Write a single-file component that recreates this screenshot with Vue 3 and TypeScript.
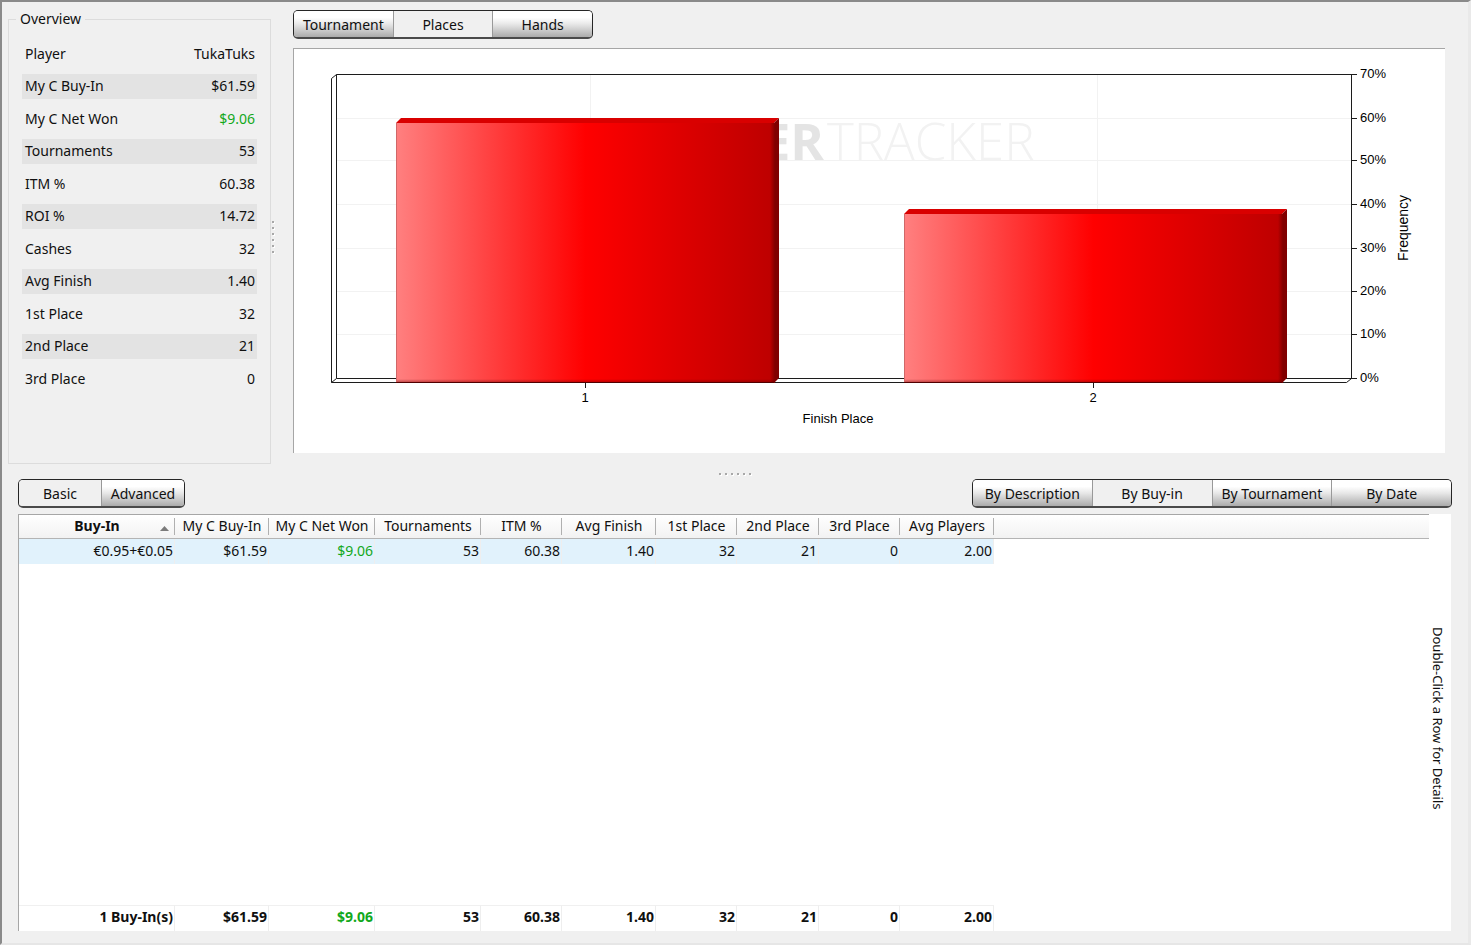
<script setup lang="ts">
import { ref } from 'vue'

interface Stat {
  label: string
  value: string
  positive?: boolean
}

interface Column {
  label: string
  width: number
  value: string
  total: string
  positive?: boolean
}

const stats: Stat[] = [
  { label: 'Player', value: 'TukaTuks' },
  { label: 'My C Buy-In', value: '$61.59' },
  { label: 'My C Net Won', value: '$9.06', positive: true },
  { label: 'Tournaments', value: '53' },
  { label: 'ITM %', value: '60.38' },
  { label: 'ROI %', value: '14.72' },
  { label: 'Cashes', value: '32' },
  { label: 'Avg Finish', value: '1.40' },
  { label: '1st Place', value: '32' },
  { label: '2nd Place', value: '21' },
  { label: '3rd Place', value: '0' },
]

const columns: Column[] = [
  { label: 'Buy-In', width: 156, value: '€0.95+€0.05', total: '1 Buy-In(s)' },
  { label: 'My C Buy-In', width: 94, value: '$61.59', total: '$61.59' },
  { label: 'My C Net Won', width: 106, value: '$9.06', total: '$9.06', positive: true },
  { label: 'Tournaments', width: 106, value: '53', total: '53' },
  { label: 'ITM %', width: 81, value: '60.38', total: '60.38' },
  { label: 'Avg Finish', width: 94, value: '1.40', total: '1.40' },
  { label: '1st Place', width: 81, value: '32', total: '32' },
  { label: '2nd Place', width: 82, value: '21', total: '21' },
  { label: '3rd Place', width: 81, value: '0', total: '0' },
  { label: 'Avg Players', width: 94, value: '2.00', total: '2.00' },
]

const chartTabs = ['Tournament', 'Places', 'Hands']
const modeTabs = ['Basic', 'Advanced']
const groupTabs = ['By Description', 'By Buy-in', 'By Tournament', 'By Date']

const chartTab = ref('Places')
const modeTab = ref('Basic')
const groupTab = ref('By Buy-in')

const ticks = [
  { label: '70%', y: 25 },
  { label: '60%', y: 69 },
  { label: '50%', y: 111 },
  { label: '40%', y: 155 },
  { label: '30%', y: 199 },
  { label: '20%', y: 242 },
  { label: '10%', y: 285 },
  { label: '0%', y: 329 },
]

const bars = [
  { label: '1', x: 102, top: 74, tick: 291 },
  { label: '2', x: 610, top: 165, tick: 799 },
]
</script>

<template>
  <main class="page">
    <section class="upper">
      <fieldset class="overview">
        <legend>Overview</legend>
        <dl>
          <div v-for="s in stats" :key="s.label" class="stat">
            <dt>{{ s.label }}</dt>
            <dd :class="{ positive: s.positive }">{{ s.value }}</dd>
          </div>
        </dl>
      </fieldset>
      <div class="grip vertical"><i v-for="n in 6" :key="n"></i></div>
      <div class="report">
        <div class="tabs wide">
          <button
            v-for="t in chartTabs"
            :key="t"
            type="button"
            :class="{ active: t === chartTab }"
            @click="chartTab = t"
          >{{ t }}</button>
        </div>
        <div class="chart">
          <svg viewBox="0 0 1151 404" role="img" aria-label="Frequency by finish place">
            <defs>
              <linearGradient id="face" x1="0" x2="1" y1="0" y2="0">
                <stop offset="0" stop-color="#ff8080" />
                <stop offset="0.5" stop-color="#ff0000" />
                <stop offset="1" stop-color="#bc0000" />
              </linearGradient>
              <linearGradient id="edge" x1="0" x2="1" y1="0" y2="0">
                <stop offset="0" stop-color="#800000" stop-opacity="0" />
                <stop offset="1" stop-color="#800000" />
              </linearGradient>
              <linearGradient id="base" x1="0" x2="0" y1="0" y2="1">
                <stop offset="0" stop-color="#600000" stop-opacity="0" />
                <stop offset="1" stop-color="#600000" stop-opacity="0.5" />
              </linearGradient>
            </defs>

            <g class="gridlines">
              <path v-for="t in ticks.slice(1, 7)" :key="t.label" :d="`M42 ${t.y + 0.5}H1057`" />
              <path d="M296.5 25V329M803.5 25V329" />
            </g>
            <text class="mark strong" x="530" y="111" text-anchor="end">ER</text>
            <text class="mark" x="533" y="111">TRACKER</text>

            <g class="frame">
              <path d="M37.5 333.5V29.5L42.5 25.5H1063M42.5 25.5V329.5H1063M1057.5 25.5V329.5L1052.5 333.5H37.5L42.5 329.5" />
              <path v-for="t in ticks.slice(1, 7)" :key="t.label" :d="`M1057 ${t.y + 0.5}H1063`" />
              <path v-for="b in bars" :key="b.label" :d="`M${b.tick + 0.5} 333V339`" />
            </g>

            <g v-for="b in bars" :key="b.label" :transform="`translate(${b.x} 0)`">
              <path :d="`M0 ${b.top}L5 ${b.top - 5}H383L378 ${b.top}Z`" fill="#d90000" />
              <path :d="`M378 ${b.top}L383 ${b.top - 5}V329L378 334Z`" fill="#800000" />
              <rect :y="b.top" width="379" :height="334 - b.top" fill="url(#face)" />
              <rect x="374" :y="b.top" width="5" :height="334 - b.top" fill="url(#edge)" />
              <rect y="330" width="379" height="4" fill="url(#base)" />
              <path :d="`M0.5 ${b.top}V334`" stroke="#d06868" />
              <path d="M0 333.5H378" stroke="#500000" />
            </g>

            <g class="labels">
              <text v-for="t in ticks" :key="t.label" x="1066" :y="t.y + 4">{{ t.label }}</text>
              <text v-for="b in bars" :key="b.label" :x="b.tick" y="353" text-anchor="middle">{{ b.label }}</text>
              <text x="544" y="374" text-anchor="middle">Finish Place</text>
              <text class="axis" transform="translate(1114 179) rotate(-90)" text-anchor="middle">Frequency</text>
            </g>
          </svg>
        </div>
      </div>
    </section>

    <div class="grip horizontal"><i v-for="n in 6" :key="n"></i></div>

    <section class="lower">
      <div class="toolbar">
        <div class="tabs narrow">
          <button
            v-for="t in modeTabs"
            :key="t"
            type="button"
            :class="{ active: t === modeTab }"
            @click="modeTab = t"
          >{{ t }}</button>
        </div>
        <div class="tabs broad">
          <button
            v-for="t in groupTabs"
            :key="t"
            type="button"
            :class="{ active: t === groupTab }"
            @click="groupTab = t"
          >{{ t }}</button>
        </div>
      </div>

      <div class="results">
        <table>
          <colgroup>
            <col v-for="c in columns" :key="c.label" :style="{ width: c.width + 'px' }" />
            <col />
          </colgroup>
          <thead>
            <tr>
              <th v-for="(c, i) in columns" :key="c.label" scope="col" :class="{ sorted: i === 0 }">
                {{ c.label }}
                <svg v-if="i === 0" class="arrow" viewBox="0 0 9 5" aria-hidden="true">
                  <path d="M0 5L4.5 0L9 5Z" fill="#7b7b7b" />
                </svg>
              </th>
              <td class="rest"></td>
            </tr>
          </thead>
          <tbody>
            <tr class="selected">
              <td v-for="c in columns" :key="c.label" :class="{ positive: c.positive }">{{ c.value }}</td>
              <td class="rest"></td>
            </tr>
            <tr class="space">
              <td :colspan="columns.length + 1"></td>
            </tr>
          </tbody>
          <tfoot>
            <tr>
              <td v-for="c in columns" :key="c.label" :class="{ positive: c.positive }">{{ c.total }}</td>
              <td class="rest"></td>
            </tr>
          </tfoot>
        </table>
        <aside class="hint"><span>Double-Click a Row for Details</span></aside>
      </div>
    </section>
  </main>
</template>

<style>
body {
  margin: 0;
  background: #f0f0f0;
}
</style>

<style scoped>
.page {
  box-sizing: border-box;
  min-height: 100vh;
  display: flex;
  flex-direction: column;
  padding: 8px 0 12px;
  border: solid;
  border-width: 2px 3px 2px 2px;
  border-color: #8a8a8a #e9e9e9 #e6e6e6 #8a8a8a;
  background: #f0f0f0;
  color: #101010;
  font: 14px/18px "Noto Sans", "Open Sans", sans-serif;
}

.positive {
  color: #12a81c;
}

.upper {
  display: flex;
  padding: 0 23px 0 6px;
}

.overview {
  box-sizing: border-box;
  flex: none;
  width: 263px;
  margin: 0;
  padding: 6px 13px 0;
  border: 1px solid #dcdcdc;
}

.overview legend {
  margin-left: -6px;
  padding: 0 4px;
}

dl {
  margin: 0;
}

.stat {
  box-sizing: border-box;
  display: flex;
  justify-content: space-between;
  align-items: center;
  height: 40px;
  padding: 0 2px 1px 3px;
}

.stat:nth-child(even) {
  height: 25px;
  background: #e3e3e3;
}

dd {
  margin: 0;
}

.grip {
  display: flex;
  gap: 4px;
}

.grip i {
  width: 2px;
  height: 2px;
  background: #a8a8a8;
  box-shadow: 1px 1px 0 #ffffff;
}

.grip.vertical {
  box-sizing: border-box;
  flex: none;
  width: 22px;
  padding-left: 1px;
  flex-direction: column;
  justify-content: center;
}

.grip.horizontal {
  height: 11px;
  padding-bottom: 4px;
  justify-content: center;
  align-items: flex-end;
}

.report {
  flex: 1;
  min-width: 0;
  padding-bottom: 11px;
}

.tabs {
  box-sizing: border-box;
  display: flex;
  height: 29px;
  border: 1px solid #262626;
  border-bottom: 2px solid #4a4a4a;
  border-radius: 5px;
  overflow: hidden;
}

.tabs.wide {
  width: 300px;
}

.tabs.narrow {
  width: 167px;
}

.tabs.broad {
  width: 480px;
}

.tabs button {
  flex: 1 1 0;
  min-width: 0;
  margin: 0;
  padding: 2px 0 0;
  border: 0;
  background: linear-gradient(#ffffff 25%, #e8e8e8 50%, #ababab);
  color: inherit;
  font: inherit;
  white-space: nowrap;
}

.tabs button + button {
  border-left: 1px solid #999999;
}

.tabs button.active {
  background: #f0f0f0;
}

.chart {
  margin-top: 9px;
  border: solid #a6a6a6;
  border-width: 1px 0 0 1px;
  background: #ffffff;
}

.chart svg {
  display: block;
  width: 100%;
  height: auto;
}

.gridlines {
  fill: none;
  stroke: #f2f2f2;
}

.frame {
  fill: none;
  stroke: #1c1c1c;
}

.labels {
  fill: #000000;
  font: 13px "Liberation Sans", Arial, sans-serif;
}

.labels .axis {
  font-size: 14px;
}

.mark {
  fill: #f2f2f2;
  font: 300 51px "Open Sans", "Noto Sans", sans-serif;
}

.mark.strong {
  fill: #e4e4e4;
  font-weight: 700;
}

.lower {
  flex: 1;
  display: flex;
  flex-direction: column;
  padding: 0 17px 0 16px;
}

.toolbar {
  display: flex;
  justify-content: space-between;
  margin-right: -1px;
}

.results {
  flex: 1;
  display: flex;
  margin-top: 6px;
  background: #ffffff;
}

table {
  flex: 1;
  min-width: 0;
  table-layout: fixed;
  border-collapse: separate;
  border-spacing: 0;
  border: solid #a6a6a6;
  border-width: 1px 0 0 1px;
}

th,
td {
  box-sizing: border-box;
  height: 25px;
  padding: 0 1px 2px 0;
  border-right: 1px solid #eeeeee;
  text-align: right;
  white-space: nowrap;
}

thead th,
thead td {
  height: 24px;
  padding: 0 0 2px;
  border-bottom: 1px solid #b4b4b4;
  border-right: 0;
  background:
    linear-gradient(#b0b0b0, #b0b0b0) right 3px / 1px 17px no-repeat,
    linear-gradient(#ffffff, #f2f2f2);
  font-weight: 400;
  text-align: center;
}

th.sorted {
  position: relative;
  font-weight: 700;
}

.arrow {
  position: absolute;
  right: 6px;
  bottom: 7px;
  width: 9px;
  height: 5px;
}

.selected td {
  background: #e1f2fc;
}

.selected .rest {
  border: 0;
  background: none;
}

thead .rest {
  background: linear-gradient(#ffffff, #f2f2f2);
}

.space td {
  height: auto;
  border: 0;
}

tfoot td {
  height: 26px;
  padding-bottom: 4px;
  border-top: 1px solid #f0f0f0;
  font-weight: 700;
}

tfoot .rest {
  border: 0;
}

.hint {
  box-sizing: border-box;
  flex: none;
  width: 22px;
  display: flex;
  justify-content: center;
  align-items: center;
  padding: 0 4px 8px 0;
  font-size: 13px;
}

.hint span {
  writing-mode: vertical-rl;
  white-space: nowrap;
}
</style>
